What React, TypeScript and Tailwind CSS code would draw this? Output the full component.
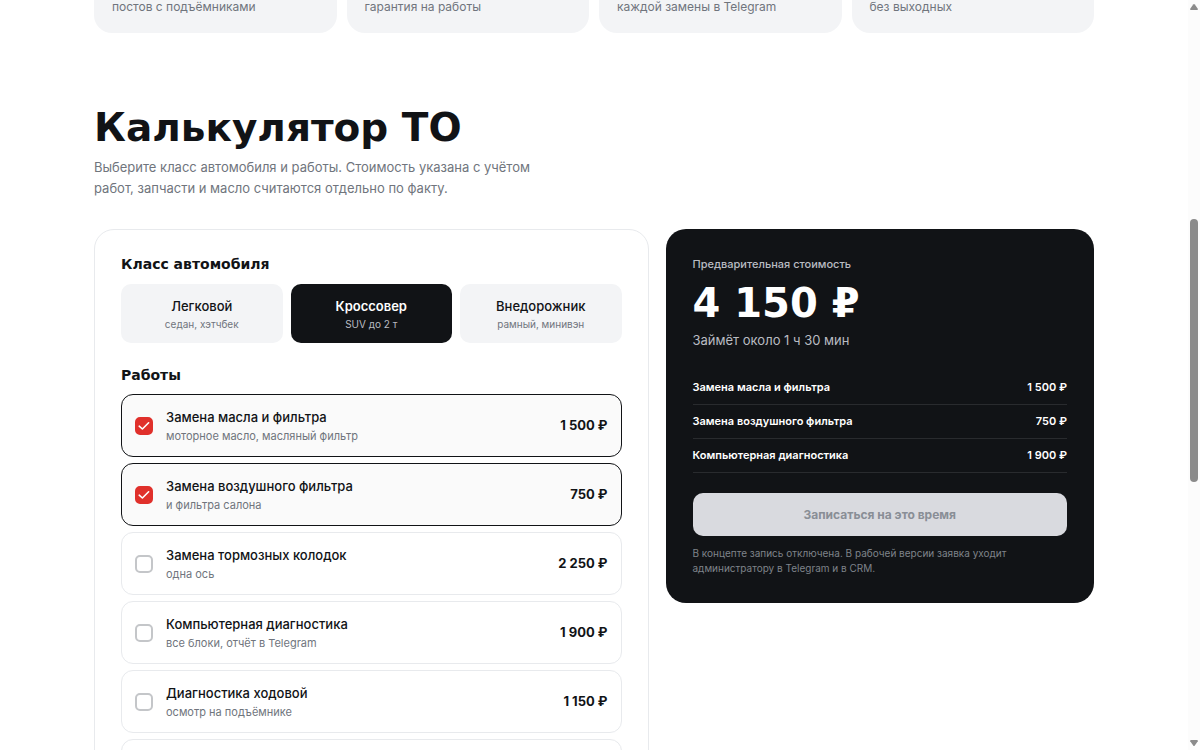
import { FC, useState } from "react";
import clsx from "clsx";

const STATS = [
  "постов с подъёмниками",
  "гарантия на работы",
  "каждой замены в Telegram",
  "без выходных",
];

const CAR_CLASSES = [
  { id: "sedan", label: "Легковой", hint: "седан, хэтчбек" },
  { id: "suv", label: "Кроссовер", hint: "SUV до 2 т" },
  { id: "offroad", label: "Внедорожник", hint: "рамный, минивэн" },
];

const WORKS = [
  { id: "oil", label: "Замена масла и фильтра", hint: "моторное масло, масляный фильтр", price: "1 500 ₽" },
  { id: "air", label: "Замена воздушного фильтра", hint: "и фильтра салона", price: "750 ₽" },
  { id: "brakes", label: "Замена тормозных колодок", hint: "одна ось", price: "2 250 ₽" },
  { id: "scan", label: "Компьютерная диагностика", hint: "все блоки, отчёт в Telegram", price: "1 900 ₽" },
  { id: "chassis", label: "Диагностика ходовой", hint: "осмотр на подъёмнике", price: "1 150 ₽" },
];

const ESTIMATE = [
  { label: "Замена масла и фильтра", price: "1 500 ₽" },
  { label: "Замена воздушного фильтра", price: "750 ₽" },
  { label: "Компьютерная диагностика", price: "1 900 ₽" },
];

type WorkRowProps = {
  work: (typeof WORKS)[number];
  checked: boolean;
  onToggle: () => void;
};

const WorkRow: FC<WorkRowProps> = ({ work, checked, onToggle }) => (
  <label
    className={clsx(
      "flex h-[63px] shrink-0 cursor-pointer items-center gap-[13px] rounded-xl border px-[13px]",
      checked ? "border-[#111316] bg-[#fafafa]" : "border-[#e8eaed] bg-white",
    )}
  >
    <span className="grid size-[18px] shrink-0 place-items-center">
      <input
        type="checkbox"
        checked={checked}
        onChange={onToggle}
        className="col-start-1 row-start-1 size-[18px] appearance-none rounded-[5px] border-2 border-[#c4c6c9] bg-white checked:border-[#e0302b] checked:bg-[#e0302b]"
      />
      {checked && (
        <svg
          className="pointer-events-none col-start-1 row-start-1 size-3"
          viewBox="0 0 12 12"
          fill="none"
          stroke="white"
          strokeWidth="1.6"
          strokeLinecap="round"
          strokeLinejoin="round"
          aria-hidden="true"
        >
          <path d="M1.2 6.2 4.4 9 10.6 2.8" />
        </svg>
      )}
    </span>
    <span className="flex min-w-0 flex-1 flex-col">
      <span className="text-[13px] leading-5 font-medium">{work.label}</span>
      <span className="text-[11px] leading-[18px] text-[#70757d]">{work.hint}</span>
    </span>
    <span className="text-[13px] font-bold whitespace-nowrap">{work.price}</span>
  </label>
);

// Page scrollbar: arrows at both ends, thumb between them.
const ScrollRail: FC = () => (
  <div className="flex w-3 shrink-0 flex-col items-center justify-between bg-[#fcfcfc] py-1" aria-hidden="true">
    <svg className="h-[6px] w-2" viewBox="0 0 8 6" fill="#8b8b8b">
      <path d="M3.2.6a1 1 0 0 1 1.6 0L7.8 4.8Q8 6 7 6H1Q0 6 .2 4.8Z" />
    </svg>
    <div className="flex w-full flex-1 flex-col items-center">
      <div className="grow-[209]" />
      <div className="w-2 grow-[263] rounded-full bg-[#8b8b8b]" />
      <div className="grow-[258]" />
    </div>
    <svg className="h-[6px] w-2" viewBox="0 0 8 6" fill="#8b8b8b">
      <path d="M3.2 5.4a1 1 0 0 0 1.6 0L7.8 1.2Q8 0 7 0H1Q0 0 .2 1.2Z" />
    </svg>
  </div>
);

export default function App() {
  const [carClass, setCarClass] = useState("suv");
  const [picked, setPicked] = useState<string[]>(["oil", "air"]);

  const toggle = (id: string) =>
    setPicked((prev) => (prev.includes(id) ? prev.filter((p) => p !== id) : [...prev, id]));

  return (
    <div className="flex h-screen overflow-hidden bg-white font-['Inter','Noto_Sans',sans-serif] text-[#111316]">
      <main className="min-w-0 flex-1 overflow-hidden">
        <div className="mx-auto w-full max-w-[1000px]">
          <section className="grid grid-cols-4 gap-[10px]">
            {STATS.map((text) => (
              <div key={text} className="rounded-b-[18px] bg-[#f3f4f6] px-[18px] pb-5 text-xs leading-[13px] text-[#70757d]">
                {text}
              </div>
            ))}
          </section>

          <section className="pt-[72px]">
            <h2 className="font-['DejaVu_Sans',sans-serif] text-[39px] leading-[46px] font-bold">
              Калькулятор ТО
            </h2>
            <p className="mt-[6px] max-w-[460px] text-[13px] leading-[21px] text-[#70757d]">
              Выберите класс автомобиля и работы. Стоимость указана с учётом работ, запчасти и масло
              считаются отдельно по факту.
            </p>

            <div className="mt-[30px] grid grid-cols-[22fr_17fr] items-start gap-[17px]">
              <div className="rounded-[20px] border border-[#e8eaed] p-[26px]">
                <h3 className="font-['DejaVu_Sans',sans-serif] text-sm leading-4 font-bold">
                  Класс автомобиля
                </h3>
                <div className="mt-3 grid grid-cols-3 gap-2">
                  {CAR_CLASSES.map((c) => {
                    const active = c.id === carClass;
                    return (
                      <button
                        key={c.id}
                        type="button"
                        aria-pressed={active}
                        onClick={() => setCarClass(c.id)}
                        className={clsx(
                          "flex h-[59px] cursor-pointer flex-col items-center justify-center rounded-[10px]",
                          active ? "bg-[#111316] text-white" : "bg-[#f3f4f6]",
                        )}
                      >
                        <span className={clsx("text-[13px] leading-5", active ? "font-semibold" : "font-medium")}>
                          {c.label}
                        </span>
                        <span
                          className={clsx(
                            "text-[10px] leading-4",
                            active ? "text-[#b9bcc2]" : "text-[#70757d]",
                          )}
                        >
                          {c.hint}
                        </span>
                      </button>
                    );
                  })}
                </div>

                <h3 className="mt-6 font-['DejaVu_Sans',sans-serif] text-sm leading-4 font-bold">
                  Работы
                </h3>
                <div className="mt-[11px] flex flex-col gap-[6px]">
                  {WORKS.map((work) => (
                    <WorkRow
                      key={work.id}
                      work={work}
                      checked={picked.includes(work.id)}
                      onToggle={() => toggle(work.id)}
                    />
                  ))}
                  <div className="h-[63px] rounded-xl border border-[#e8eaed]" />
                </div>
              </div>

              <aside className="rounded-[20px] bg-[#111316] p-[27px] text-white">
                <div className="text-[11px] leading-4 font-medium text-[#b9bcc2]">Предварительная стоимость</div>
                <div className="mt-1 font-['DejaVu_Sans',sans-serif] text-[40px] leading-[54px] font-bold">
                  4 150 ₽
                </div>
                <div className="text-[13px] leading-[21px] text-[#b9bcc2]">Займёт около 1 ч 30 мин</div>

                <ul className="mt-5">
                  {ESTIMATE.map((line) => (
                    <li
                      key={line.label}
                      className="flex h-[34px] items-center justify-between border-b border-[#292b2e] text-[11px] font-semibold"
                    >
                      <span>{line.label}</span>
                      <span>{line.price}</span>
                    </li>
                  ))}
                </ul>

                <button
                  type="button"
                  disabled
                  className="mt-5 h-[43px] w-full rounded-[10px] bg-[#d9dadf] text-xs font-bold text-[#898e96]"
                >
                  Записаться на это время
                </button>
                <p className="mt-[10px] max-w-[330px] text-[10px] leading-[15px] text-[#7f838a]">
                  В концепте запись отключена. В рабочей версии заявка уходит администратору в Telegram
                  и в CRM.
                </p>
              </aside>
            </div>
          </section>
        </div>
      </main>
      <ScrollRail />
    </div>
  );
}
